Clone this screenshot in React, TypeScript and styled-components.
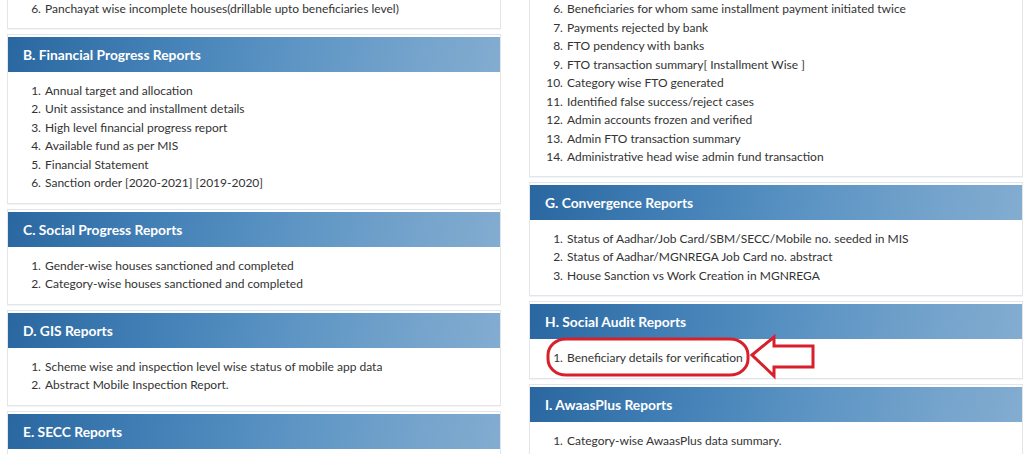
import React from "react";
import styled, { createGlobalStyle } from "styled-components";

const Global = createGlobalStyle`
  html, body { margin: 0; padding: 0; background: #ffffff; }
  body { font-family: Lato, "Open Sans", "Liberation Sans", sans-serif; color: #333; overflow: hidden; }
`;

const Page = styled.div`
  display: grid;
  grid-template-columns: 494px 494px;
  column-gap: 28px;
  padding-left: 7px;
  height: 454px;
  overflow: hidden;
  align-items: start;
`;

const Column = styled.div`
  display: flex;
  flex-direction: column;
  gap: 5px;
`;

const Panel = styled.section<{ $cut?: boolean }>`
  background: #fff;
  border: 1px solid #e2e5ea;
  border-top: ${(p) => (p.$cut ? "none" : "1px solid #e2e5ea")};
  padding-top: ${(p) => (p.$cut ? "0" : "2px")};
  box-shadow: 0 1px 1px rgba(0, 0, 0, 0.04);
`;

const Header = styled.h3`
  margin: 0;
  height: 35px;
  display: flex;
  align-items: center;
  padding-left: 15px;
  font-size: 13.8px;
  font-weight: 700;
  color: #fff;
  background: linear-gradient(100deg, #2a67a0 0%, #3e7cb3 25%, #5a93c3 55%, #72a2cb 80%, #83acd0 100%);
`;

const Body = styled.div<{ $cut?: boolean }>`
  position: relative;
  padding: ${(p) => (p.$cut ? "0 0 9px" : "10px 0 10px")};
`;

const List = styled.ol`
  margin: 0;
  padding-left: 36px;
  font-size: 12px;
  line-height: 18.5px;
  color: #333;
`;

const Item = styled.li`
  padding-left: 1px;
`;

const Mark = styled.svg`
  position: absolute;
  left: 0;
  top: 0;
  overflow: visible;
  pointer-events: none;
`;

type Sec = { title?: string; start?: number; items: string[]; cut?: boolean; mark?: boolean };

const left: Sec[] = [
  { cut: true, start: 6, items: ["Panchayat wise incomplete houses(drillable upto beneficiaries level)"] },
  {
    title: "B. Financial Progress Reports",
    items: [
      "Annual target and allocation",
      "Unit assistance and installment details",
      "High level financial progress report",
      "Available fund as per MIS",
      "Financial Statement",
      "Sanction order [2020-2021] [2019-2020]",
    ],
  },
  {
    title: "C. Social Progress Reports",
    items: ["Gender-wise houses sanctioned and completed", "Category-wise houses sanctioned and completed"],
  },
  {
    title: "D. GIS Reports",
    items: ["Scheme wise and inspection level wise status of mobile app data", "Abstract Mobile Inspection Report."],
  },
  { title: "E. SECC Reports", items: [] },
];

const right: Sec[] = [
  {
    cut: true,
    start: 6,
    items: [
      "Beneficiaries for whom same installment payment initiated twice",
      "Payments rejected by bank",
      "FTO pendency with banks",
      "FTO transaction summary[ Installment Wise ]",
      "Category wise FTO generated",
      "Identified false success/reject cases",
      "Admin accounts frozen and verified",
      "Admin FTO transaction summary",
      "Administrative head wise admin fund transaction",
    ],
  },
  {
    title: "G. Convergence Reports",
    items: [
      "Status of Aadhar/Job Card/SBM/SECC/Mobile no. seeded in MIS",
      "Status of Aadhar/MGNREGA Job Card no. abstract",
      "House Sanction vs Work Creation in MGNREGA",
    ],
  },
  { title: "H. Social Audit Reports", items: ["Beneficiary details for verification"], mark: true },
  { title: "I. AwaasPlus Reports", items: ["Category-wise AwaasPlus data summary."] },
];

const Annotation = () => (
  <Mark width="300" height="60">
    <rect x="18" y="0" width="200" height="36" rx="18" ry="16" fill="none" stroke="#d8202c" strokeWidth="3" />
    <path
      d="M222 16 L244 -2 L244 7 L283 7 L283 28 L244 28 L244 37 Z"
      fill="#fff"
      stroke="#d8202c"
      strokeWidth="3"
      strokeLinejoin="miter"
    />
  </Mark>
);

const Section = ({ s }: { s: Sec }) => (
  <Panel $cut={s.cut}>
    {s.title && <Header>{s.title}</Header>}
    <Body $cut={s.cut}>
      <List start={s.start ?? 1}>
        {s.items.map((t) => (
          <Item key={t}>{t}</Item>
        ))}
      </List>
      {s.mark && <Annotation />}
    </Body>
  </Panel>
);

export default function App() {
  return (
    <>
      <Global />
      <Page>
        <Column>
          {left.map((s, i) => (
            <Section key={i} s={s} />
          ))}
        </Column>
        <Column>
          {right.map((s, i) => (
            <Section key={i} s={s} />
          ))}
        </Column>
      </Page>
    </>
  );
}
